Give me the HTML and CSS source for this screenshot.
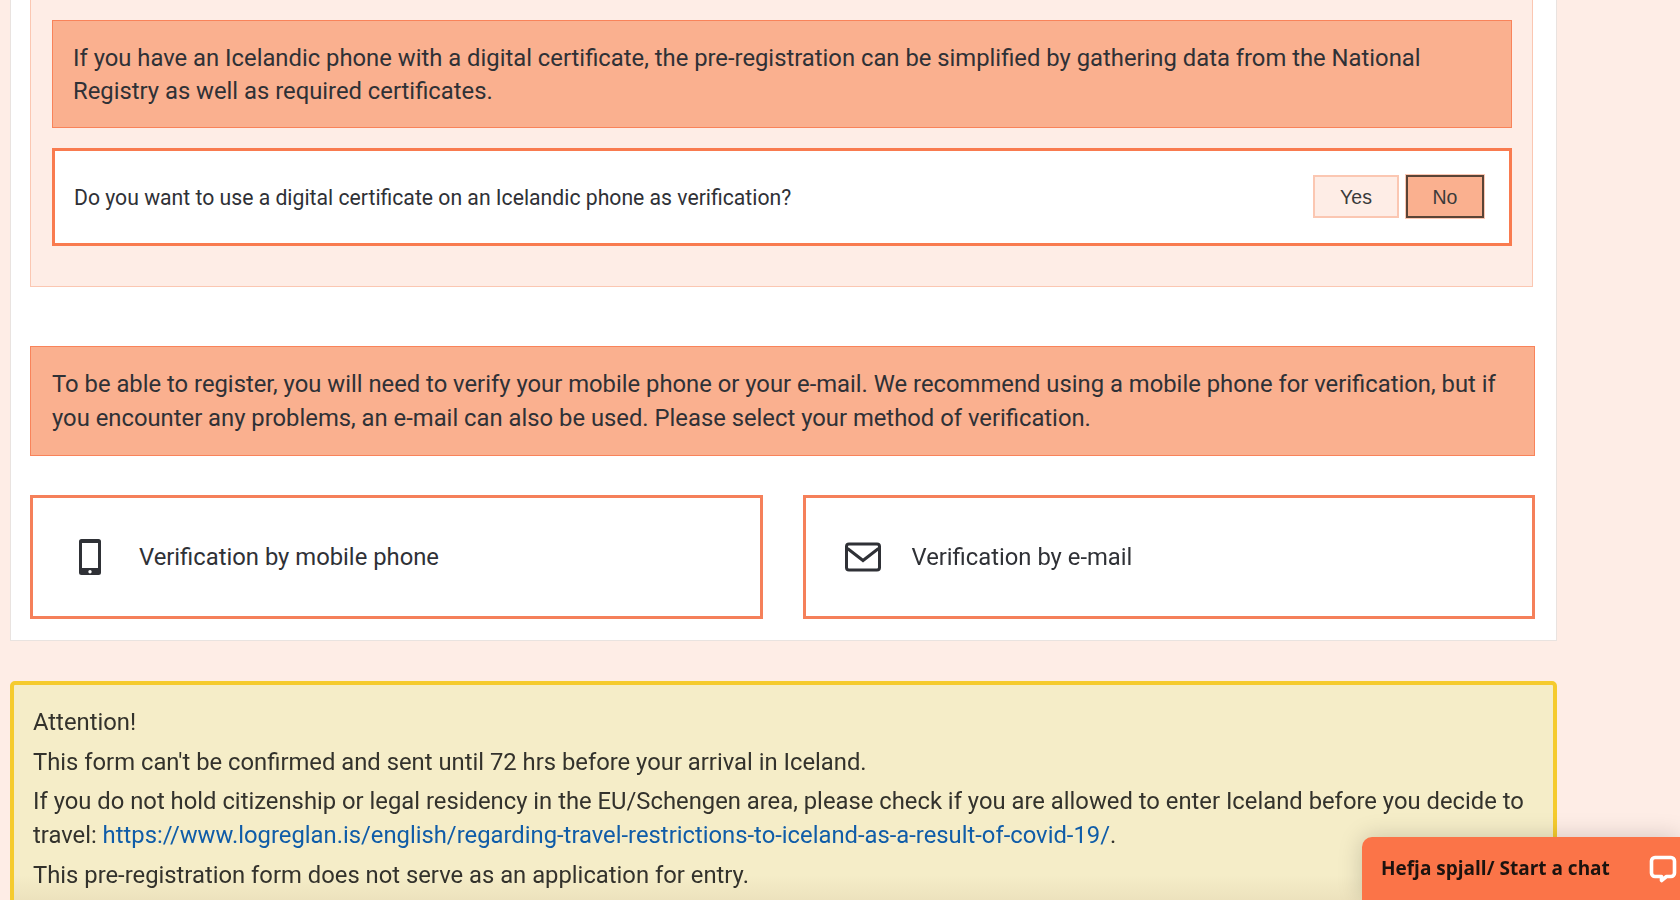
FILE: index.html
```html
<!DOCTYPE html>
<html lang="en">
<head>
<meta charset="utf-8">
<title>Pre-registration</title>
<link rel="stylesheet" href="styles.css">
</head>
<body>
<main class="page">
  <section class="card">
    <div class="panel">
      <div class="alert alert-intro">If you have an Icelandic phone with a digital certificate, the pre-registration can be simplified by gathering data from the National Registry as well as required certificates.</div>
      <div class="question">
        <span class="question-text">Do you want to use a digital certificate on an Icelandic phone as verification?</span>
        <div class="choices">
          <button class="choice choice-yes">Yes</button>
          <button class="choice choice-no">No</button>
        </div>
      </div>
    </div>
    <div class="alert alert-wide">To be able to register, you will need to verify your mobile phone or your e-mail. We recommend using a mobile phone for verification, but if you encounter any problems, an e-mail can also be used. Please select your method of verification.</div>
    <div class="methods">
      <a class="method">
        <svg class="method-icon" viewBox="0 0 36 36" aria-hidden="true"><path fill-rule="evenodd" d="M9.500 0h17A2.500 2.500 0 0 1 29 2.500v31a2.500 2.500 0 0 1-2.500 2.500h-17A2.500 2.500 0 0 1 7 33.500v-31A2.500 2.500 0 0 1 9.500 0zM10 4v25h16V4zm8 27a1.700 1.700 0 1 0 0 3.400 1.700 1.700 0 0 0 0-3.400z"/></svg>
        <span>Verification by mobile phone</span>
      </a>
      <a class="method">
        <svg class="method-icon" viewBox="0 0 36 36" aria-hidden="true"><rect x="1.500" y="5" width="33" height="26" rx="2.500" fill="none" stroke="currentColor" stroke-width="3"/><path d="M2.500 9.500 18 21.500 33.500 9.500" fill="none" stroke="currentColor" stroke-width="3"/></svg>
        <span>Verification by e-mail</span>
      </a>
    </div>
  </section>
  <section class="notice">
    <p>Attention!</p>
    <p>This form can't be confirmed and sent until 72 hrs before your arrival in Iceland.</p>
    <p>If you do not hold citizenship or legal residency in the EU/Schengen area, please check if you are allowed to enter Iceland before you decide to travel: <a class="link">https://www.logreglan.is/english/regarding-travel-restrictions-to-iceland-as-a-result-of-covid-19/</a>.</p>
    <p>This pre-registration form does not serve as an application for entry.</p>
  </section>
</main>
<div class="chat">
  <span class="chat-label">Hefja spjall/ Start a chat</span>
  <svg class="chat-icon" viewBox="0 0 28 28" aria-hidden="true"><path d="M6 2.500h16A3.500 3.500 0 0 1 25.500 6v12a3.500 3.500 0 0 1-3.500 3.500h-4.500L12.500 25.500v-4H6A3.500 3.500 0 0 1 2.500 18V6A3.500 3.500 0 0 1 6 2.500z" fill="none" stroke="currentColor" stroke-width="3.600" stroke-linejoin="round"/></svg>
</div>
</body>
</html>
```
FILE: styles.css
```css
* { box-sizing: border-box; }
html, body { margin: 0; height: 900px; overflow: hidden; }
body {
  background: #feede6;
  color: #2f3136;
  font-family: Roboto, "Liberation Sans", sans-serif;
  font-size: 23.8px;
  line-height: 33px;
  filter: blur(0.35px);
}
.page { width: 1547px; margin-left: 10px; }
.card {
  background: #fff;
  border: 1px solid #e9e3e0;
  border-top: 0;
  padding: 0 21px 21px 19px;
}
.panel {
  background: #feede6;
  border: 1px solid #fbc7b2;
  border-top: 0;
  padding: 20px 20px 40px 21px;
  margin-bottom: 59px;
  margin-right: 2px;
}
.alert {
  background: #fab08f;
  border: 1px solid #f9835a;
  padding: 20px 21px;
}
.alert-intro { padding: 21px 20px 19px; }
.question {
  display: flex;
  align-items: center;
  justify-content: space-between;
  height: 98px;
  margin-top: 20px;
  padding: 0 25px 0 19px;
  background: #fff;
  border: 3px solid #f97b4f;
  font-size: 21.2px;
}
.choices { display: flex; gap: 7px; margin-bottom: 2px; }
.choice {
  height: 43px;
  font-family: "Liberation Sans", Arial, sans-serif;
  font-size: 19.5px;
  color: #3a3a3a;
  padding: 2px 0 0;
}
.choice-yes { width: 86px; background: #feede6; border: 2px solid #fbc7b2; }
.choice-no { width: 78px; background: #fab08f; border: 2px solid #5a4436; box-shadow: 0 0 0 1px #fbc7b2; }
.alert-wide { line-height: 34px; }
.methods {
  display: grid;
  grid-template-columns: 1fr 1fr;
  gap: 40px;
  margin-top: 39px;
}
.method {
  display: flex;
  align-items: center;
  gap: 31px;
  height: 124px;
  padding-left: 39px;
  border: 3px solid #f5805a;
  color: #2f3136;
}
.method-icon { width: 36px; height: 36px; fill: currentColor; flex: none; }
.notice {
  height: 260px;
  margin-top: 40px;
  padding: 20px 19px;
  background: linear-gradient(#f5edc8 190px, #ebe0bb 219px);
  border: 4px solid #f5cb2e;
  border-radius: 5px;
  color: #33322c;
  line-height: 34px;
}
.notice p { margin: 0 0 5.5px; }
.link { color: #0f5ca8; }
.chat {
  position: fixed;
  left: 1362px;
  top: 837px;
  width: 318px;
  height: 63px;
  display: flex;
  align-items: center;
  justify-content: space-between;
  padding: 0 3px 0 19px;
  background: #fb7448;
  color: #fff;
  border-radius: 10px 0 0 0;
  box-shadow: 0 0 24px rgba(0, 0, 0, .18);
}
.chat-label {
  font-family: "Open Sans", sans-serif;
  font-weight: 700;
  font-size: 19px;
  color: #1c130f;
}
.chat-icon { width: 28px; height: 28px; }
```
